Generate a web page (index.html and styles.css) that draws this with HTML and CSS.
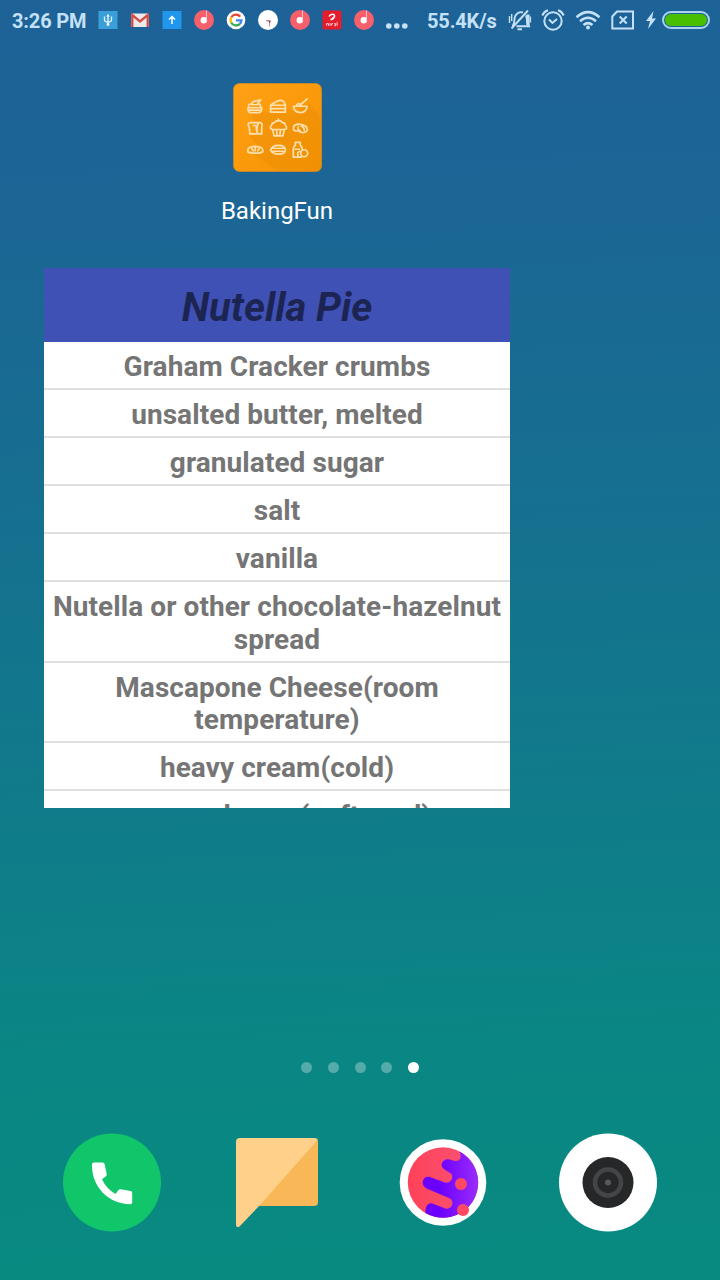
FILE: index.html
```html
<!DOCTYPE html>
<html lang="en">
<head>
<meta charset="utf-8">
<title>Home screen</title>
<link rel="stylesheet" href="styles.css">
</head>
<body>
<svg class="defs" width="0" height="0" aria-hidden="true">
  <defs>
    <linearGradient id="pink" x1="0" y1="0" x2="1" y2="0"><stop offset="0" stop-color="#ff4258"/><stop offset="1" stop-color="#f65478"/></linearGradient>
    <linearGradient id="violet" x1="0" y1="0" x2="1" y2="0"><stop offset="0.3" stop-color="#6c00ff"/><stop offset="1" stop-color="#9a2cfb"/></linearGradient>
    <linearGradient id="orange" x1="0" y1="0" x2="1" y2="1"><stop offset="0" stop-color="#ffa116"/><stop offset="1" stop-color="#f69300"/></linearGradient>
    <symbol id="music" viewBox="0 0 20 20"><circle cx="10" cy="10" r="10" fill="#f85f6c"/><circle cx="9.8" cy="10.200" r="3.200" fill="#fff"/><path d="M12.500 0.500V10" stroke="#ffc3c8" stroke-width="1"/></symbol>
  </defs>
</svg>
<header class="status">
  <span class="clock">3:26 PM</span>
  <div class="notes">
    <svg viewBox="0 0 20 20"><rect x="0.500" y="1" width="19" height="18" fill="#3a9fd9"/><g fill="none" stroke="#e6f6ff" stroke-width="1.300"><path d="M10 5v10M6.500 6.500v3q0 2.500 3.500 2.500t3.500-2.500v-3"/></g><path d="M8.300 6.500 10 4l1.700 2.500z" fill="#fff"/><circle cx="10" cy="14.500" r="1.400" fill="#fff"/></svg>
    <svg viewBox="0 0 20 20"><rect x="1" y="3.500" width="18" height="13.500" rx="1" fill="#eceaed"/><path d="M2.300 17V5l7.700 6.500L17.700 5v12" fill="none" stroke="#d54c43" stroke-width="2.300"/></svg>
    <svg viewBox="0 0 20 20"><rect x="0.500" y="1" width="19" height="18" fill="#2196ed"/><path d="M10 14V7M7 9.500l3-3 3 3" fill="none" stroke="#fff" stroke-width="1.500"/></svg>
    <svg><use href="#music"/></svg>
    <svg viewBox="0 0 20 20"><circle cx="10" cy="10" r="9.300" fill="#fff"/><g fill="none" stroke-width="2.300"><path d="M14.200 6.600A5.400 5.400 0 0 0 5.300 7.300" stroke="#ea4335"/><path d="M5.300 7.300a5.400 5.400 0 0 0 0 5.400" stroke="#fbbc05"/><path d="M5.300 12.700a5.400 5.400 0 0 0 8.500 1.200" stroke="#34a853"/><path d="M13.800 13.900q1.600-1.600 1.600-3.600H10" stroke="#4285f4"/></g></svg>
    <svg viewBox="0 0 20 20"><circle cx="10" cy="10" r="10" fill="#fff"/><path d="M11.500 11.500v5" stroke="#e58a92" stroke-width="1"/><path d="M8.500 10.700l4.500.5M11.500 11v2" stroke="#8a3c4a" stroke-width="1"/></svg>
    <svg><use href="#music"/></svg>
    <svg viewBox="0 0 20 20"><rect x="0.500" y="0.500" width="19" height="19" rx="2" fill="#e51c2c"/><path d="M7 6.500C8.500 3.500 13 3.500 12.500 6.300c-.4 2-2.600 3.500-4 3.200 2 0 2.600-1.300 2.400-2.500" fill="none" stroke="#fff" stroke-width="1.600"/><path d="M4.500 15.700v-2h2v2M8 13v2.700m1.600 0v-2h1.500m1 0h1.500v2h-1.500m3-3.500v3.500" fill="none" stroke="#ffd3d6" stroke-width="1"/></svg>
    <svg><use href="#music"/></svg>
  </div>
  <svg class="more" viewBox="0 0 22 20" fill="#c5e1f7"><circle cx="2.800" cy="16" r="2.800"/><circle cx="10.800" cy="16" r="2.800"/><circle cx="18.800" cy="16" r="2.800"/></svg>
  <span class="speed">55.4K/s</span>
  <svg class="bell" viewBox="0 0 24 22" fill="none" stroke="#c5e1f7" stroke-width="1.900"><path d="M4.500 17.300C7.500 14 5.500 9.500 7.500 6.500q3-4.500 7.500-3M18 6.500q1.200 3 1 6.500l2 4.300H8.500M3.500 19.500 20 1.500M9.500 20.300h4.500"/><path d="M1.500 7v7M3.700 5v7" stroke-width="1.400"/><path d="M19 6h2v10h-2zM22.500 7.500v6" stroke-width="1.200" fill="#c5e1f7"/></svg>
  <svg class="alarm" viewBox="0 0 24 22" fill="none" stroke="#c5e1f7" stroke-width="2"><circle cx="12" cy="12" r="8.700"/><path d="M8 10.500 11.500 14 16 10M1.300 6.500Q3 2.500 7 1.300M22.700 6.500Q21 2.500 17 1.300"/></svg>
  <svg class="wifi" viewBox="0 0 26 20" fill="none" stroke="#c5e1f7" stroke-width="2.500"><path d="M1.500 7.200Q13-3 24.500 7.200M5 11.200q8-6.800 16 0M8.500 15q4.500-3.700 9 0"/><circle cx="13" cy="17.500" r="2" fill="#c5e1f7" stroke="none"/></svg>
  <svg class="sim" viewBox="0 0 24 20" fill="none" stroke="#c5e1f7" stroke-width="2"><path d="M6 1.500h16v17H1.300V6.500zM8.700 6.500l7 7m0-7-7 7"/></svg>
  <svg class="bolt" viewBox="0 0 12 20" fill="#c5e1f7"><path d="M8.500 1 1 11h4L3 19 11 8.500H7z"/></svg>
  <div class="battery"><div class="charge"></div></div>
</header>

<main class="home">
  <div class="app">
    <svg class="app-icon" viewBox="0 0 90 90">
      <rect x="0.500" y="0.500" width="89" height="89" rx="6" fill="url(#orange)"/>
      <path d="M76 20 89.500 34v51q0 4.500-5 4.500H47L17 70l12-2-14-17 15 1-15-25 20 3 15-5 15 5z" fill="#e58a05" opacity=".35"/>
      <rect x="0.500" y="0.500" width="89" height="89" rx="6" fill="none" stroke="#dc8c19" stroke-width=".7"/>
      <g fill="none" stroke="#ffe0ae" stroke-width="1.700" stroke-linejoin="round" stroke-linecap="round">
        <path d="M15 25h14q0 5-3 5h-8q-3 0-3-5zM16 24q-1-3 3-3 1-3 5-3l4-1-3 4q3 0 3 3M19 22h6M17 27.500h10"/>
        <path d="M38 22.500h15v7H38zM38 22.500q6-5 11-5 3 1 4 5M38 26h15"/>
        <path d="M61 23.500h14q-1 6.500-7 6.500t-7-6.500zM67 23l8-7M64 23q2-4 5-1"/>
        <path d="M16.500 45q-3-5 1.500-5h9q3.500 0 2 5v6.500H17zM20.500 43h3v4m2-6q-2 5-1 10"/>
        <path d="M40 47h12l-1.500 6.500h-9zM40 47q-4-1-1-4 0-3 3-3 1-2 4-2t4 2q3 0 3 3 3 3-1 4M44 48l.5 4m3.500-4-.5 4M46 36.500v1.500"/>
        <path d="M61 46q0-4 5-4.500 5 0 8 2.500 3 5-2 6-4 .5-6-1.500-5 .5-5-2.500zm5-1.500q-1 3 2 4m1-5q3 1 3 4"/>
        <path d="M15 69.500q-1-5.500 7.500-5.500t7.500 5.500q-2 1.500-7.500 1.500t-7.500-1.500zm4-3 1.500 2m2-3v3m4-2-1.500 2"/>
        <path d="M38 68q1-5 8-5t7 5q-1 4-7 4t-8-4zM40 66h11M40 69h11"/>
        <path d="M63 60h5v3q2 1 2 4M63 60v3q-2 1-2 4v8h8M63 67h4"/><circle cx="72" cy="71" r="3.500"/><path d="M68 69q-4 1-2 5"/>
      </g>
    </svg>
    <span class="app-name">BakingFun</span>
  </div>
  <section class="widget">
    <h1 class="widget-title">Nutella Pie</h1>
    <ul class="ingredients">
      <li>Graham Cracker crumbs</li>
      <li>unsalted butter, melted</li>
      <li>granulated sugar</li>
      <li>salt</li>
      <li>vanilla</li>
      <li>Nutella or other chocolate-hazelnut spread</li>
      <li>Mascapone Cheese(room temperature)</li>
      <li>heavy cream(cold)</li>
      <li>cream cheese(softened)</li>
    </ul>
  </section>
</main>

<nav class="pages"><i></i><i></i><i></i><i></i><i class="current"></i></nav>

<footer class="dock">
  <svg viewBox="0 0 100 100"><circle cx="50" cy="49.500" r="49" fill="#11c56a"/><path d="M32 29.500q-2-.1-2 2C29.500 53 46 71.300 68.500 71.200q1.700 0 1.700-2V60q0-1.800-1.700-2l-10-1.800q-1.500-.2-2.200 1L53.500 61Q44 55.500 40 46.300l4-3q1-1 .6-2.500l-2-9.800q-.3-1.500-1.800-1.500z" fill="#fff"/></svg>
  <svg viewBox="0 0 100 100"><path d="M18 5h69q4 0 4 4v60q0 4-4 4H18z" fill="#f9b858"/><path d="M13 5h74q2.500 0 3.700 1.700L32 73 12.500 93.500Q9 95.500 9 91V9q0-4 4-4z" fill="#ffd08a"/></svg>
  <svg viewBox="0 0 100 100">
    <circle cx="50" cy="49.500" r="43.300" fill="#fff"/><circle cx="50" cy="49.500" r="35.200" fill="url(#pink)"/>
    <path d="M66 18.200C69.500 23 67.500 28.500 62 28l-5.500-1.500C49.500 25 45.500 33 51.500 36.500l6.500 4C61 43.500 58.500 50.500 52.500 49.700L37 44C30 42 26.500 51.500 33.500 55.500L56.500 65.300C62 68 59.500 76.500 53 75.700L40 70.800C35 69 32.500 73 32.300 80A35.200 35.200 0 0 0 85.200 49.500 35.200 35.200 0 0 0 66 18.200z" fill="url(#violet)"/>
    <circle cx="68" cy="51" r="6" fill="#ff4962"/><circle cx="70" cy="77" r="6" fill="#ff4962"/>
  </svg>
  <svg viewBox="0 0 100 100"><circle cx="50" cy="49.500" r="49" fill="#fff"/><circle cx="50" cy="49.500" r="25.500" fill="#262729"/><circle cx="50" cy="49.500" r="13" fill="none" stroke="#444547" stroke-width="4.500"/><circle cx="50" cy="49.500" r="3" fill="#58595b"/></svg>
</footer>
</body>
</html>
```
FILE: styles.css
```css
* { box-sizing: border-box; }
body {
  margin: 0;
  width: 720px;
  height: 1280px;
  overflow: hidden;
  display: flex;
  flex-direction: column;
  font-family: Roboto, sans-serif;
  background: linear-gradient(178deg, #1e6297 0%, #1c6595 16%, #166f90 38%, #107b8a 62%, #0a8684 81%, #088a80 100%);
}
svg { display: block; flex: none; }
.defs { position: absolute; }
.status {
  height: 40px;
  display: flex;
  align-items: center;
  padding-left: 12px;
  color: #c5e1f7;
  font-size: 20px;
  font-weight: 700;
  white-space: nowrap;
}
.clock { width: 86px; padding-top: 1px; letter-spacing: -0.15px; }
.notes { display: flex; gap: 12px; }
.notes svg { width: 20px; height: 20px; }
.more { width: 22px; height: 20px; margin: 0 19px 0 12px; }
.speed { width: 81px; padding-top: 1px; letter-spacing: -0.15px; }
.bell { width: 24px; height: 22px; margin-right: 9px; }
.alarm { width: 24px; height: 22px; margin-right: 10px; }
.wifi { width: 26px; height: 20px; margin-right: 10px; }
.sim { width: 24px; height: 20px; margin-right: 10px; }
.bolt { width: 12px; height: 20px; margin-right: 5px; }
.battery {
  width: 48px;
  height: 18px;
  padding: 1px;
  border: 2px solid #a9d3ee;
  border-radius: 9px;
}
.charge { height: 12px; border-radius: 6px; background: #48bf00; }
.home { height: 768px; padding: 43px 0 0 44px; }
.app {
  width: 466px;
  height: 185px;
  display: flex;
  flex-direction: column;
  align-items: center;
}
.app-icon { width: 89px; height: 89px; }
.app-name {
  margin-top: 25px;
  color: #fff;
  font-size: 24px;
  line-height: 28px;
}
.widget { width: 466px; height: 540px; overflow: hidden; background: #fff; }
.widget-title {
  margin: 0;
  height: 74px;
  padding-top: 4px;
  background: #3f51b5;
  color: #1c2452;
  font-size: 40px;
  font-style: italic;
  font-weight: 700;
  line-height: 72px;
  text-align: center;
}
.ingredients { margin: 0; padding: 0; list-style: none; }
.ingredients li {
  padding: 9px 8px 4.5px;
  border-bottom: 2px solid #e0e0e0;
  color: #757575;
  font-size: 28px;
  font-weight: 700;
  letter-spacing: 0.07px;
  line-height: 32.5px;
  text-align: center;
}
.pages {
  display: flex;
  justify-content: center;
  gap: 15.7px;
  height: 325px;
  padding-top: 254px;
}
.pages i { width: 11px; height: 11px; border-radius: 50%; background: #55aba9; }
.pages .current { background: #fff; }
.dock { display: flex; justify-content: space-between; padding: 0 62px; }
.dock svg { width: 100px; height: 100px; }
```
